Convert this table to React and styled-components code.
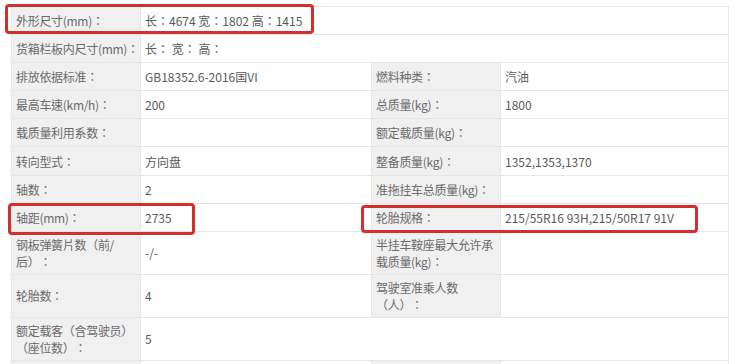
import React from 'react'
import styled, { createGlobalStyle } from 'styled-components'

const GlobalStyle = createGlobalStyle`
  * { box-sizing: border-box; }
  body {
    margin: 0;
    background: #ffffff;
    font-family: "Noto Sans CJK TC", "Noto Sans CJK SC", sans-serif;
  }
`

const Page = styled.div`
  position: relative;
  width: 750px;
  height: 364px;
  overflow: hidden;
  padding: 6px 0 0 11px;
`

const Table = styled.div`
  width: 718px;
  border-top: 1px solid #e6e6e6;
  border-left: 1px solid #e6e6e6;
`

const Row = styled.div`
  display: grid;
  grid-template-columns: 129px 231px 129px 228px;
  min-height: 28.1px;
  border-bottom: 1px solid #e6e6e6;
`

const Cell = styled.div`
  display: flex;
  align-items: center;
  padding: 4px 0 4px 4px;
  font-size: 12px;
  line-height: 17px;
  letter-spacing: ${p => (p.$label ? '-0.3px' : '0')};
  text-spacing-trim: space-all;
  border-right: 1px solid #e6e6e6;
  color: ${p => (p.$label ? '#6a6a6a' : '#5a5a5a')};
  background: ${p => (p.$label ? '#f0f0f0' : '#ffffff')};
  grid-column: ${p => (p.$wide ? 'span 3' : 'auto')};
`

const Mark = styled.div`
  position: absolute;
  left: ${p => p.$x}px;
  top: ${p => p.$y}px;
  width: ${p => p.$w}px;
  height: ${p => p.$h}px;
  border: 3px solid #d32f2c;
  border-radius: 4px;
  pointer-events: none;
`

const rows = [
  ['外形尺寸(mm)：', '长：4674 宽：1802 高：1415'],
  ['货箱栏板内尺寸(mm)：', '长： 宽： 高：'],
  ['排放依据标准：', 'GB18352.6-2016国VI', '燃料种类：', '汽油'],
  ['最高车速(km/h)：', '200', '总质量(kg)：', '1800'],
  ['载质量利用系数：', '', '额定载质量(kg)：', ''],
  ['转向型式：', '方向盘', '整备质量(kg)：', '1352,1353,1370'],
  ['轴数：', '2', '准拖挂车总质量(kg)：', ''],
  ['轴距(mm)：', '2735', '轮胎规格：', '215/55R16 93H,215/50R17 91V'],
  ['钢板弹簧片数（前/后）：', '-/-', '半挂车鞍座最大允许承载质量(kg)：', ''],
  ['轮胎数：', '4', '驾驶室准乘人数（人）：', ''],
  ['额定载客（含驾驶员）（座位数）：', '5'],
  ['', '', '', ''],
]

export default function App() {
  return (
    <>
      <GlobalStyle />
      <Page>
        <Table>
          {rows.map((r, i) => (
            <Row key={i}>
              <Cell $label>{r[0]}</Cell>
              <Cell $wide={r.length === 2}>{r[1]}</Cell>
              {r.length === 4 && <Cell $label>{r[2]}</Cell>}
              {r.length === 4 && <Cell>{r[3]}</Cell>}
            </Row>
          ))}
        </Table>
        <Mark $x={5} $y={4} $w={309} $h={30} />
        <Mark $x={8} $y={203} $w={187} $h={32} />
        <Mark $x={361} $y={205} $w={337} $h={28} />
      </Page>
    </>
  )
}
